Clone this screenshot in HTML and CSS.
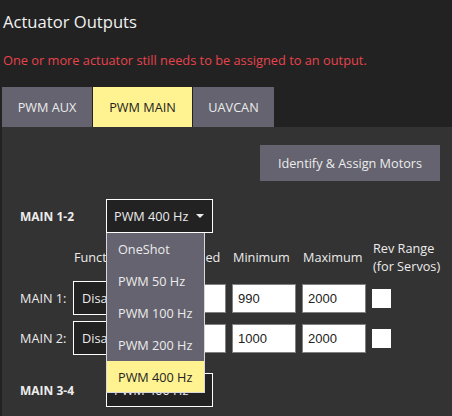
FILE: index.html
```html
<!DOCTYPE html>
<html>
<head>
<meta charset="utf-8">
<link rel="stylesheet" href="styles.css">
</head>
<body>
<div class="page">
  <h1 class="title">Actuator Outputs</h1>
  <p class="warning">One or more actuator still needs to be assigned to an output.</p>
  <div class="tabs">
    <div class="tab">PWM AUX</div>
    <div class="tab active">PWM MAIN</div>
    <div class="tab">UAVCAN</div>
  </div>
  <div class="panel">
    <div class="btn-row">
      <div class="btn">Identify &amp; Assign Motors</div>
    </div>
    <div class="group-row">
      <div class="group-label">MAIN 1-2</div>
      <div class="select-wrap">
        <div class="select">PWM 400 Hz <span class="caret"></span></div>
        <div class="menu">
          <div class="item">OneShot</div>
          <div class="item">PWM 50 Hz</div>
          <div class="item">PWM 100 Hz</div>
          <div class="item">PWM 200 Hz</div>
          <div class="item selected">PWM 400 Hz</div>
        </div>
      </div>
    </div>
    <div class="grid">
      <div></div>
      <div class="head">Function</div>
      <div class="head">Disarmed</div>
      <div class="head">Minimum</div>
      <div class="head">Maximum</div>
      <div class="head">Rev Range<br>(for Servos)</div>

      <div class="row-label">MAIN 1:</div>
      <div class="fsel">Disabled</div>
      <div class="inp">1000</div>
      <div class="inp">990</div>
      <div class="inp">2000</div>
      <div class="chk"></div>

      <div class="row-label">MAIN 2:</div>
      <div class="fsel">Disabled</div>
      <div class="inp">1000</div>
      <div class="inp">1000</div>
      <div class="inp">2000</div>
      <div class="chk"></div>
    </div>
    <div class="group-row">
      <div class="group-label">MAIN 3-4</div>
      <div class="select-wrap">
        <div class="select">PWM 400 Hz <span class="caret"></span></div>
      </div>
    </div>
  </div>
</div>
</body>
</html>
```
FILE: styles.css
```css
html, body {
  margin: 0;
  padding: 0;
  background: #222222;
  font-family: "Open Sans", "Noto Sans", sans-serif;
  color: #e6e6e6;
  overflow: hidden;
}
.page {
  width: 452px;
  height: 416px;
  display: flex;
  flex-direction: column;
}
.title {
  margin: 9px 0 0 3px;
  font-size: 16.6px;
  font-weight: 400;
  line-height: 26px;
  color: #f2f2f2;
}
.warning {
  margin: 16px 0 0 3px;
  font-size: 12.8px;
  line-height: 18px;
  color: #e8434d;
}
.tabs {
  display: flex;
  gap: 1px;
  margin: 18px 0 0 2px;
}
.tab {
  height: 40px;
  display: flex;
  align-items: center;
  justify-content: center;
  background: #64636f;
  color: #ececec;
  font-size: 12.7px;
}
.tab:nth-child(1) { width: 90px; }
.tab:nth-child(2) { width: 99px; }
.tab:nth-child(3) { width: 81px; }
.tab.active {
  background: #fff291;
  color: #222222;
}
.panel {
  flex: 1;
  margin-left: 2px;
  background: #333333;
  padding: 18px 0 0 18px;
}
.btn-row {
  display: flex;
  justify-content: flex-end;
  padding-right: 12px;
}
.btn {
  width: 180px;
  height: 36px;
  display: flex;
  align-items: center;
  justify-content: center;
  background: #64636f;
  color: #ececec;
  font-size: 12.7px;
}
.group-row {
  display: flex;
  align-items: center;
  margin-top: 18px;
}
.group-label {
  width: 86px;
  font-size: 12px;
  font-weight: 700;
  color: #ececec;
}
.select-wrap {
  position: relative;
}
.select {
  box-sizing: border-box;
  width: 107px;
  height: 34px;
  border: 1px solid #ffffff;
  background: #222222;
  color: #ececec;
  font-size: 12.7px;
  display: flex;
  align-items: center;
  padding-left: 7px;
}
.caret {
  width: 0;
  height: 0;
  border-left: 4.5px solid transparent;
  border-right: 4.5px solid transparent;
  border-top: 4.5px solid #ececec;
  margin-left: 8px;
}
.menu {
  position: absolute;
  top: 100%;
  left: 0;
  width: 99px;
  box-sizing: border-box;
  border: 1px solid #d8d8d8;
  border-top: none;
  background: #64636f;
  z-index: 5;
}
.item {
  height: 32px;
  display: flex;
  align-items: center;
  padding-left: 11px;
  font-size: 12.7px;
  color: #ececec;
}
.item.selected {
  background: #fff291;
  color: #222222;
  height: 31px;
}
.grid {
  display: grid;
  grid-template-columns: 47px 83px 64px 64px 64px auto;
  grid-template-rows: 36px 34px 34px;
  column-gap: 6px;
  row-gap: 6px;
  margin-top: 6px;
  align-items: center;
}
.head {
  font-size: 12.7px;
  line-height: 18px;
  color: #ececec;
  padding-left: 1px;
}
.row-label {
  font-size: 12.7px;
  color: #ececec;
  white-space: nowrap;
}
.fsel {
  height: 34px;
  box-sizing: border-box;
  border: 1px solid #ffffff;
  background: #222222;
  display: flex;
  align-items: center;
  padding-left: 8px;
  font-size: 12.7px;
  color: #ececec;
}
.inp {
  height: 29px;
  box-sizing: border-box;
  border: 1px solid #808080;
  background: #ffffff;
  color: #222222;
  font-family: "Liberation Sans", Arial, sans-serif;
  font-size: 13px;
  display: flex;
  align-items: center;
  padding-left: 5px;
}
.chk {
  width: 19px;
  height: 19px;
  background: #ffffff;
}
```
